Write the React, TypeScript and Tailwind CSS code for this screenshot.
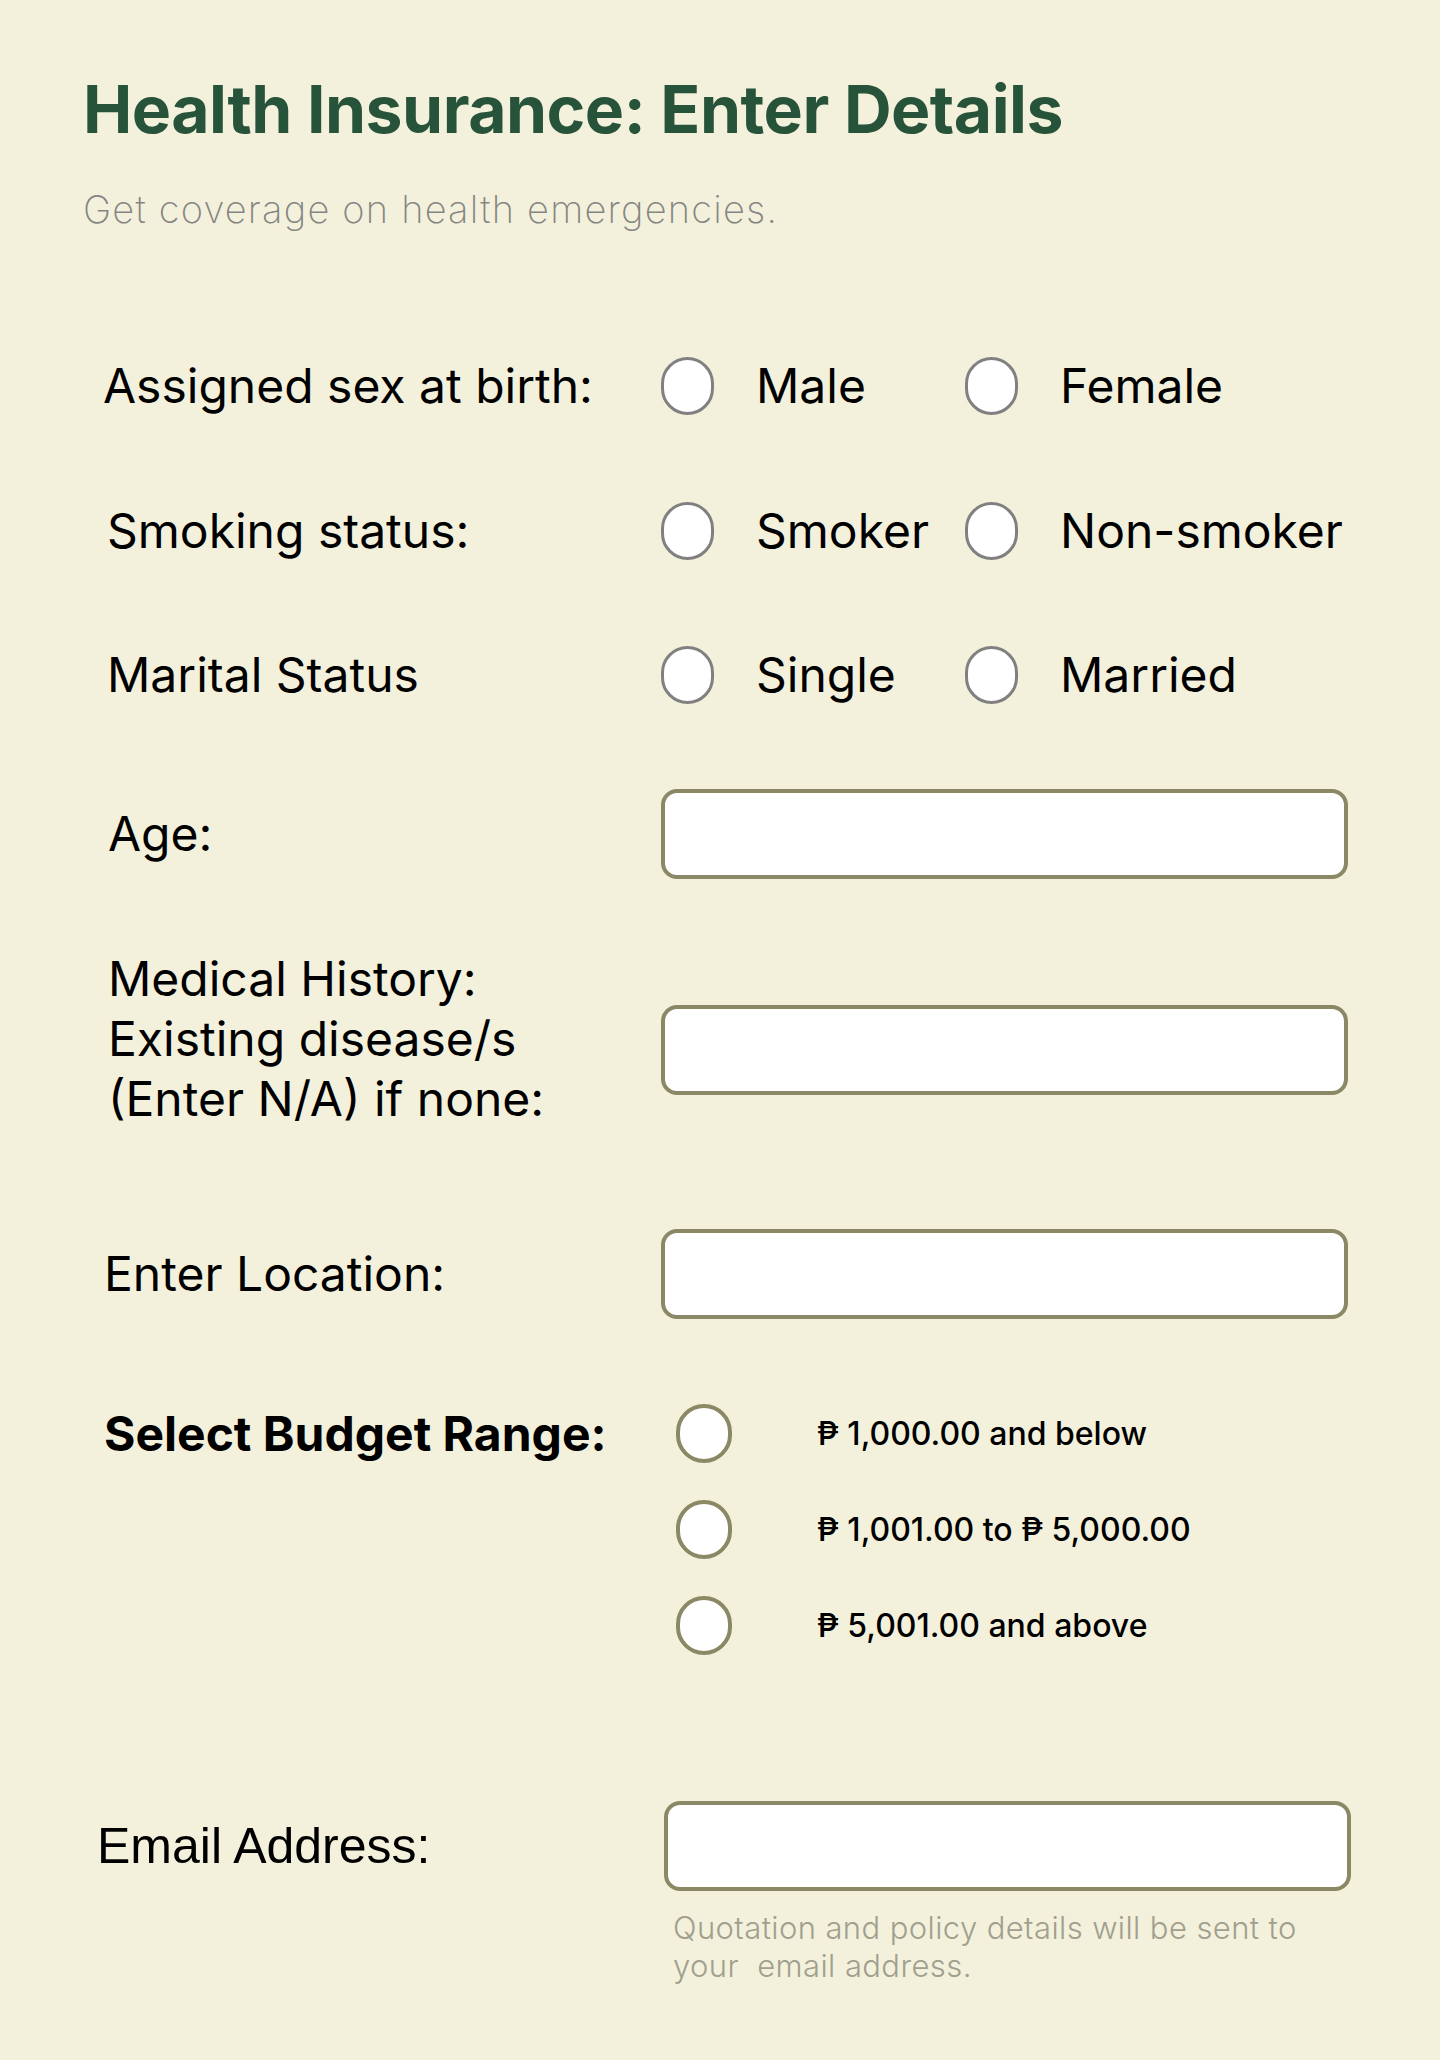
import React from "react";

const inter = { fontFamily: "Inter, 'Noto Sans', sans-serif" };

function Radio({ tone = "gray" }: { tone?: "gray" | "olive" }) {
  return (
    <span
      className={
        tone === "gray"
          ? "block w-[53px] h-[58px] shrink-0 rounded-full bg-white border-[3px] border-[#808080]"
          : "block w-[56px] h-[59px] shrink-0 rounded-full bg-white border-[4px] border-[#8b8865]"
      }
    />
  );
}

function Choice({ label, width }: { label: string; width?: string }) {
  return (
    <label className={`flex items-center gap-[42px] ${width ?? ""}`}>
      <Radio />
      <span className="text-[48px] leading-none text-black">{label}</span>
    </label>
  );
}

function Box() {
  return (
    <input
      type="text"
      className="block w-[687px] h-[90px] bg-white border-[4px] border-[#8b8865] rounded-[16px] outline-none"
    />
  );
}

function RadioRow({ label, a, b, mt, pad }: { label: string; a: string; b: string; mt: string; pad: string }) {
  return (
    <div className={`flex items-center h-[100px] ${mt}`}>
      <div className={`w-[578px] ${pad} text-[48px] text-black`}>{label}</div>
      <Choice label={a} width="w-[304px]" />
      <Choice label={b} />
    </div>
  );
}

export default function App() {
  return (
    <div className="min-h-screen bg-[#f3f1dc] pl-[83px] pt-[69px] pb-[80px]" style={inter}>
      <h1 className="text-[66px] leading-[80px] font-bold text-[#27533a] tracking-[-0.5px]">
        Health Insurance: Enter Details
      </h1>
      <p className="mt-[37px] text-[38px] leading-[46px] font-extralight tracking-[1.2px] text-[#858582]">
        Get coverage on health emergencies.
      </p>

      <form className="flex flex-col">
        <RadioRow label="Assigned sex at birth:" a="Male" b="Female" mt="mt-[104px]" pad="pl-[20px]" />
        <RadioRow label="Smoking status:" a="Smoker" b="Non-smoker" mt="mt-[45px]" pad="pl-[24px]" />
        <RadioRow label="Marital Status" a="Single" b="Married" mt="mt-[44px]" pad="pl-[24px]" />

        <div className="flex items-center mt-[64px]">
          <div className="w-[578px] pl-[25px] text-[48px] text-black">Age:</div>
          <Box />
        </div>

        <div className="flex items-start mt-[70px]">
          <div className="w-[578px] pl-[25px] text-[48px] leading-[60px] text-black">
            Medical History:
            <br />
            Existing disease/s
            <br />
            (Enter N/A) if none:
          </div>
          <div className="mt-[56px]">
            <Box />
          </div>
        </div>

        <div className="flex items-center mt-[100px]">
          <div className="w-[578px] pl-[21px] text-[48px] text-black">Enter Location:</div>
          <Box />
        </div>

        <div className="flex items-start mt-[85px]">
          <div className="w-[593px] pl-[21px] text-[48px] leading-[59px] font-bold text-black">
            Select Budget Range:
          </div>
          <div className="flex flex-col gap-[37px]">
            {["₱ 1,000.00 and below", "₱ 1,001.00 to ₱ 5,000.00", "₱ 5,001.00 and above"].map((t) => (
              <label key={t} className="flex items-center gap-[85px]">
                <Radio tone="olive" />
                <span className="text-[32px] font-medium text-black">{t}</span>
              </label>
            ))}
          </div>
        </div>

        <div className="flex items-center mt-[146px]">
          <div
            className="w-[581px] pl-[14px] text-[50px] text-black"
            style={{ fontFamily: "'Liberation Sans', Arial, sans-serif" }}
          >
            Email Address:
          </div>
          <Box />
        </div>
        <p className="ml-[590px] mt-[18px] w-[680px] text-[31px] leading-[38px] font-light tracking-[0.4px] text-[#a19f8d]">
          Quotation and policy details will be sent to your&nbsp; email address.
        </p>
      </form>
    </div>
  );
}
